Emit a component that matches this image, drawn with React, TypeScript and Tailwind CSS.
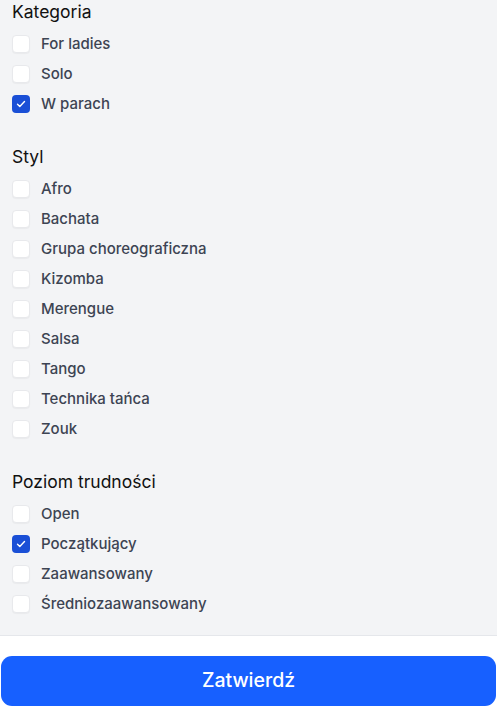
import { useState } from 'react';

interface FilterGroup {
  id: string;
  title: string;
  options: string[];
}

const groups: FilterGroup[] = [
  { id: 'category', title: 'Kategoria', options: ['For ladies', 'Solo', 'W parach'] },
  {
    id: 'style',
    title: 'Styl',
    options: ['Afro', 'Bachata', 'Grupa choreograficzna', 'Kizomba', 'Merengue', 'Salsa', 'Tango', 'Technika tańca', 'Zouk'],
  },
  { id: 'level', title: 'Poziom trudności', options: ['Open', 'Początkujący', 'Zaawansowany', 'Średniozaawansowany'] },
];

const Checkbox = ({ checked }: { checked: boolean }) => (
  <span
    className={
      checked
        ? 'w-[18px] h-[18px] rounded-[4px] bg-[#1a4fd6] flex items-center justify-center flex-shrink-0'
        : 'w-[18px] h-[18px] rounded-[4px] bg-white border border-[#e8e9ec] shadow-[0_1px_1px_rgba(0,0,0,0.04)] flex-shrink-0'
    }
  >
    {checked && (
      <svg width="12" height="12" viewBox="0 0 12 12" fill="none">
        <path d="M2.5 6.2l2.3 2.3 4.7-4.9" stroke="white" strokeWidth="1.4" strokeLinecap="round" strokeLinejoin="round" />
      </svg>
    )}
  </span>
);

export default function App() {
  const [selected, setSelected] = useState<Record<string, boolean>>({
    'category:W parach': true,
    'level:Początkujący': true,
  });

  const toggle = (key: string) => setSelected((s) => ({ ...s, [key]: !s[key] }));

  return (
    <div className="w-[497px] h-[714px] flex flex-col bg-white font-['Inter',sans-serif]">
      <div className="flex-1 bg-[#f3f4f6] border-b border-[#e5e7eb] px-3 flex flex-col gap-[26px]">
        {groups.map((group) => (
          <div key={group.id}>
            <h3 className="h-6 leading-6 text-[17.5px] text-[#111111]">{group.title}</h3>
            <ul className="mt-[5px]">
              {group.options.map((option) => {
                const key = `${group.id}:${option}`;
                return (
                  <li key={key}>
                    <label
                      className="h-[30px] flex items-center gap-[11px] cursor-pointer"
                      onClick={() => toggle(key)}
                    >
                      <Checkbox checked={!!selected[key]} />
                      <span className="text-[15px] font-medium text-[#3d4453]">{option}</span>
                    </label>
                  </li>
                );
              })}
            </ul>
          </div>
        ))}
      </div>
      <div className="h-[78px] flex-shrink-0 px-[1px] pt-5">
        <button className="w-full h-[50px] rounded-[11px] bg-[#1760ff] text-white text-[19.5px] font-medium">
          Zatwierdź
        </button>
      </div>
    </div>
  );
}
